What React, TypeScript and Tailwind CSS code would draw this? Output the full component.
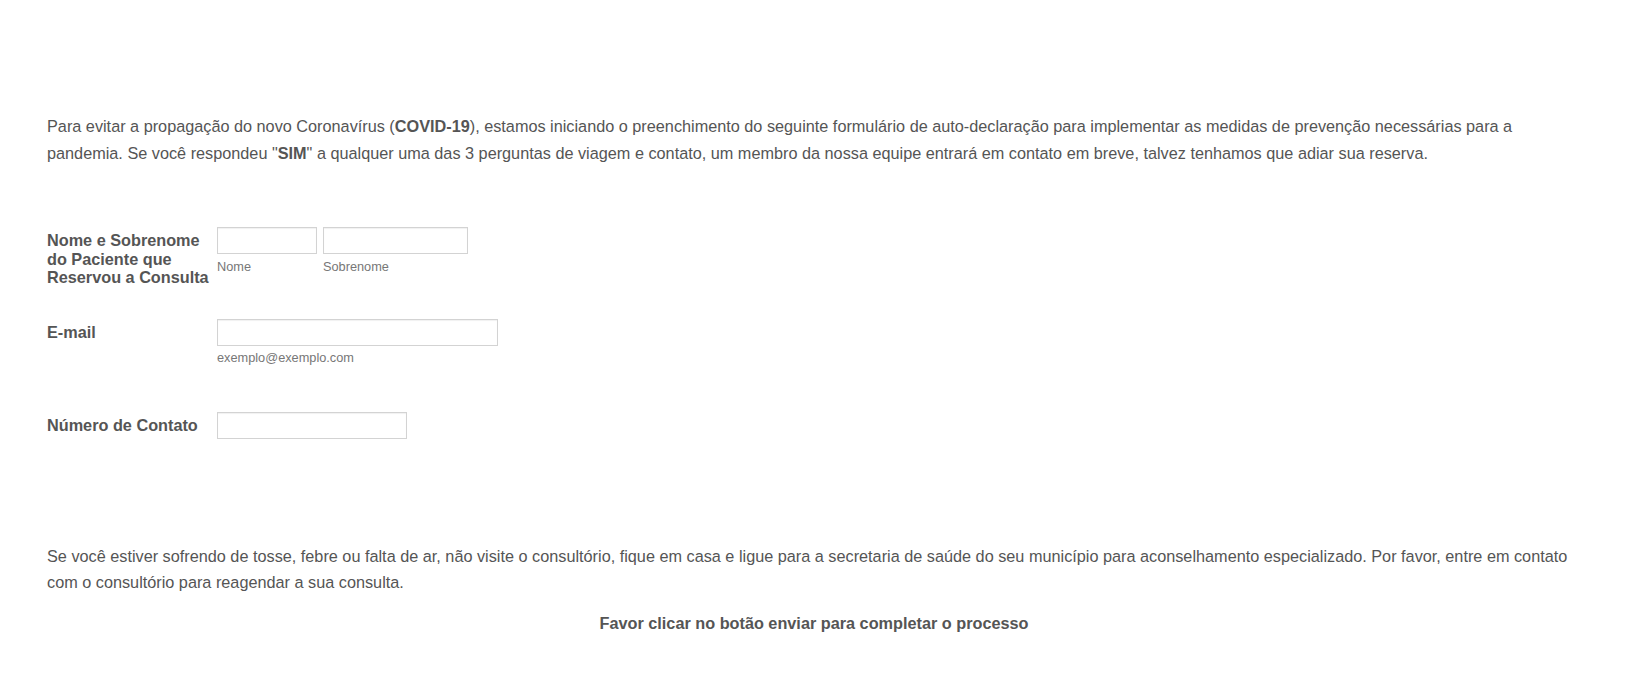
import React from "react"

const font = { fontFamily: '"Liberation Sans", Arial, sans-serif' }

const Field: React.FC<{ w: string; sub?: string; gap?: string }> = ({
  w,
  sub,
  gap = "mt-[4px]",
}) => (
  <div className="flex flex-col">
    <input
      type="text"
      className={`${w} h-[27px] border border-[#d3d3d3] bg-white shadow-[inset_0_1px_1px_rgba(0,0,0,0.06)] outline-none`}
    />
    {sub && (
      <label className={`${gap} text-[12.75px] leading-[15px] text-[#777]`}>
        {sub}
      </label>
    )}
  </div>
)

export default function App() {
  return (
    <div
      className="min-h-[687px] w-full bg-white px-[47px] pt-[113px] text-[16.25px] text-[#555]"
      style={font}
    >
      <p className="leading-[27px]">
        Para evitar a propagação do novo Coronavírus (<b>COVID-19</b>), estamos
        iniciando o preenchimento do seguinte formulário de auto-declaração para
        implementar as medidas de prevenção necessárias para a pandemia. Se você
        respondeu "<b>SIM</b>" a qualquer uma das 3 perguntas de viagem e
        contato, um membro da nossa equipe entrará em contato em breve, talvez
        tenhamos que adiar sua reserva.
      </p>

      <div className="mt-[60px] flex flex-col">
        <div className="flex h-[92px] items-start">
          <div className="w-[170px] pt-[4px] font-bold leading-[18.5px]">
            Nome e Sobrenome do Paciente que Reservou a Consulta
          </div>
          <div className="flex gap-[6px]">
            <Field w="w-[100px]" sub="Nome" gap="mt-[5px]" />
            <Field w="w-[145px]" sub="Sobrenome" gap="mt-[5px]" />
          </div>
        </div>

        <div className="flex h-[93px] items-start">
          <div className="w-[170px] pt-[4px] font-bold leading-[18.5px]">E-mail</div>
          <Field w="w-[281px]" sub="exemplo@exemplo.com" />
        </div>

        <div className="flex items-start">
          <div className="w-[170px] pt-[4px] font-bold leading-[18.5px]">
            Número de Contato
          </div>
          <Field w="w-[190px]" />
        </div>
      </div>

      <p className="mt-[104px] leading-[26px]">
        Se você estiver sofrendo de tosse, febre ou falta de ar, não visite o
        consultório, fique em casa e ligue para a secretaria de saúde do seu
        município para aconselhamento especializado. Por favor, entre em contato
        com o consultório para reagendar a sua consulta.
      </p>

      <p className="mt-[15px] text-center font-bold leading-[26px]">
        Favor clicar no botão enviar para completar o processo
      </p>
    </div>
  )
}
